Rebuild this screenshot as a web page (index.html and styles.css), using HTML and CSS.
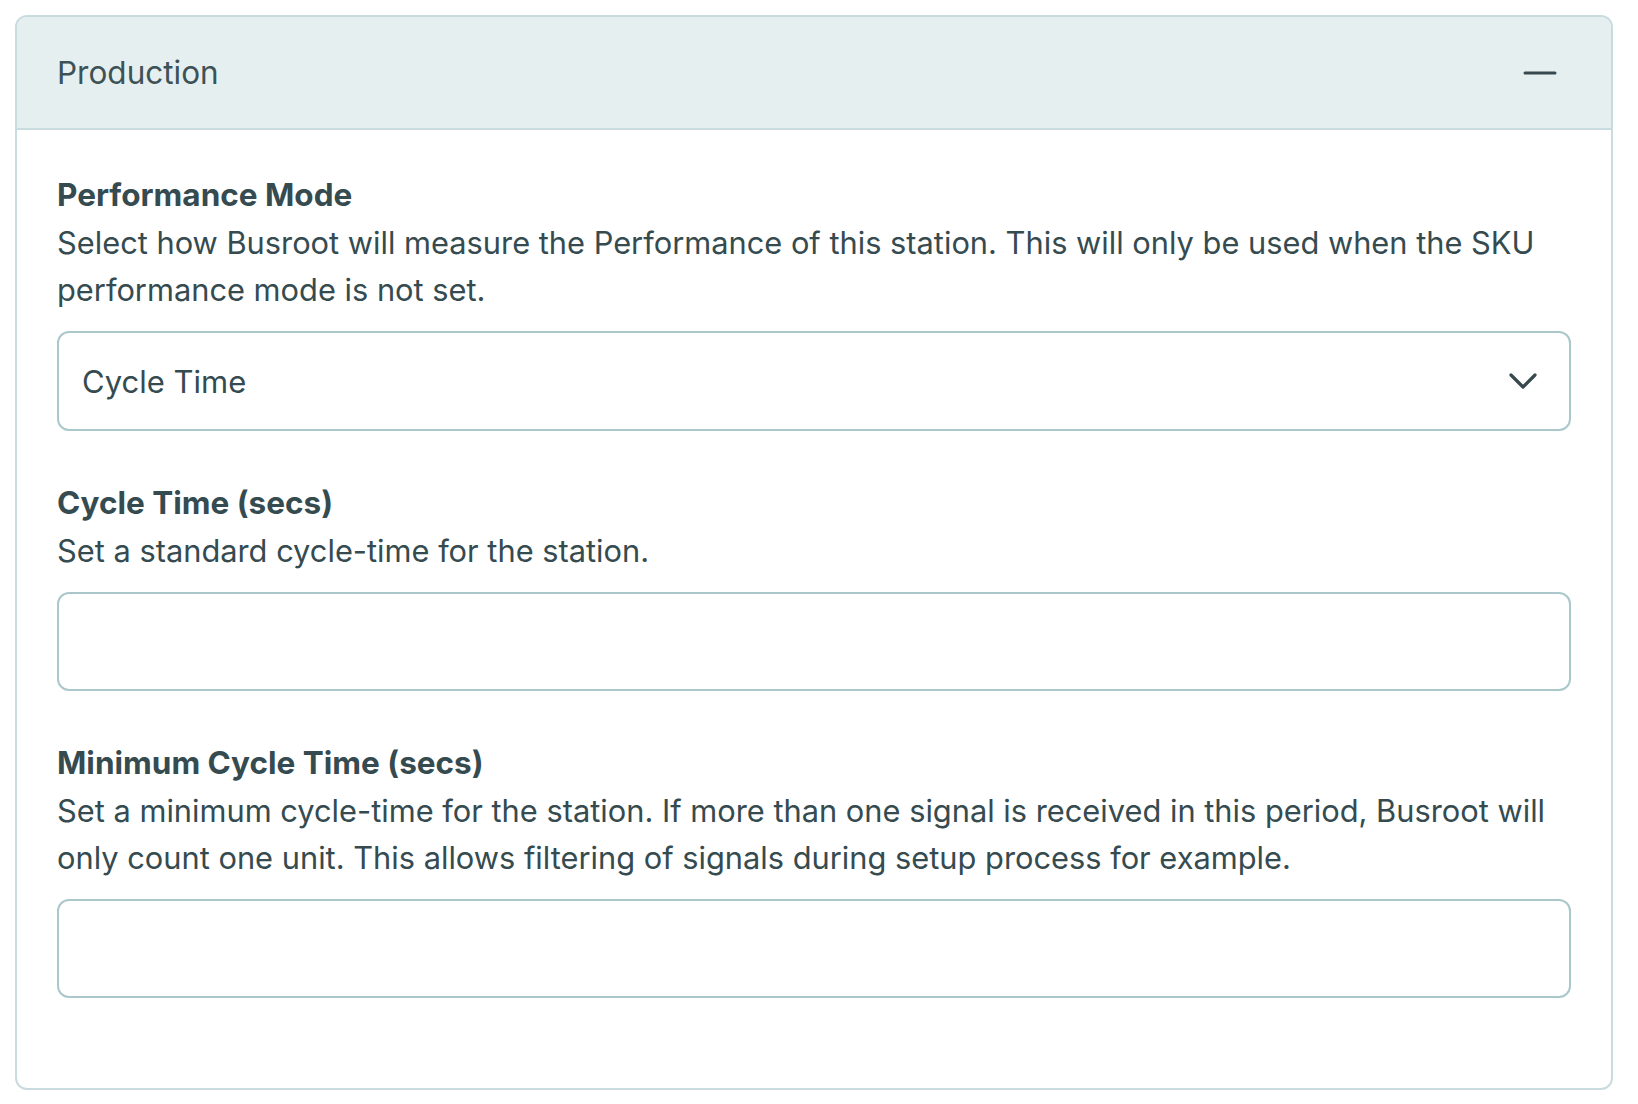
FILE: index.html
```html
<!DOCTYPE html>
<html lang="en">
<head>
    <meta charset="UTF-8">
    <meta name="viewport" content="width=device-width, initial-scale=1.0">
    <title>Station Settings</title>
    <link rel="stylesheet" href="styles.css">
</head>
<body>
    <div class="panel">
        <div class="panel-header">
            <span class="panel-title">Production</span>
            <button class="collapse-button" type="button" aria-label="Collapse">
                <svg width="34" height="6" viewBox="0 0 34 6">
                    <line x1="2" y1="3" x2="32" y2="3" stroke="#37494e" stroke-width="3" stroke-linecap="round"/>
                </svg>
            </button>
        </div>

        <div class="panel-body">
            <div class="field">
                <label class="field-label" for="performance-mode">Performance Mode</label>
                <p class="field-help">Select how Busroot will measure the Performance of this station. This will only be used when the SKU performance mode is not set.</p>
                <div class="select-wrap">
                    <select id="performance-mode" class="field-input field-select">
                        <option>Cycle Time</option>
                        <option>Units per Hour</option>
                    </select>
                    <svg class="select-arrow" width="30" height="18" viewBox="0 0 30 18">
                        <polyline points="3,3 15,15 27,3" fill="none" stroke="#37494e" stroke-width="3.2" stroke-linecap="round" stroke-linejoin="round"/>
                    </svg>
                </div>
            </div>

            <div class="field">
                <label class="field-label" for="cycle-time">Cycle Time (secs)</label>
                <p class="field-help">Set a standard cycle-time for the station.</p>
                <input id="cycle-time" class="field-input" type="text">
            </div>

            <div class="field">
                <label class="field-label" for="min-cycle-time">Minimum Cycle Time (secs)</label>
                <p class="field-help">Set a minimum cycle-time for the station. If more than one signal is received in this period, Busroot will only count one unit. This allows filtering of signals during setup process for example.</p>
                <input id="min-cycle-time" class="field-input" type="text">
            </div>
        </div>
    </div>
</body>
</html>
```

FILE: styles.css
```css
body {
    font-family: Inter, "Noto Sans", sans-serif;
    background-color: #ffffff;
    color: #354b50;
    margin: 0;
    padding: 15px;
}

.panel {
    width: 1598px;
    box-sizing: border-box;
    border: 2px solid #c8dbde;
    border-radius: 12px;
    overflow: hidden;
    background-color: #ffffff;
}

.panel-header {
    height: 113px;
    box-sizing: border-box;
    background-color: #e6eff0;
    border-bottom: 2px solid #c8dbde;
    display: flex;
    align-items: center;
    justify-content: space-between;
    padding: 0 54px 0 40px;
}

.panel-title {
    font-size: 31.5px;
    color: #3d5257;
}

.collapse-button {
    background: none;
    border: none;
    padding: 0;
    display: flex;
    cursor: pointer;
}

.panel-body {
    padding: 41px 40px 42px 40px;
}

.field {
    margin-bottom: 48px;
}

.field-label {
    display: block;
    font-size: 31.5px;
    font-weight: 700;
    line-height: 48px;
}

.field-help {
    margin: 0 0 18px 0;
    font-size: 30.8px;
    line-height: 47px;
}

.select-wrap {
    position: relative;
}

.field-input {
    display: block;
    width: 100%;
    height: 99px;
    box-sizing: border-box;
    border: 2px solid #aac8cc;
    border-radius: 12px;
    background-color: #ffffff;
    padding: 0 23px;
    font-family: inherit;
    font-size: 31px;
    color: #354b50;
    outline: none;
    appearance: none;
}

.field-select {
    height: 100px;
}

.select-arrow {
    position: absolute;
    right: 33px;
    top: 41px;
    pointer-events: none;
}
```
